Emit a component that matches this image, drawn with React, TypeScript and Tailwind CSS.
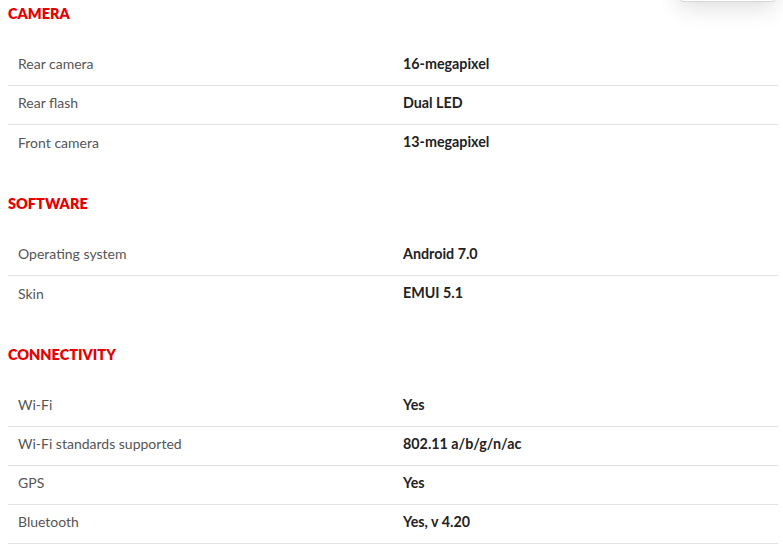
import React from 'react';

type Spec = { label: string; value: string };

const sections: { title: string; rows: Spec[]; closed?: boolean }[] = [
  {
    title: 'CAMERA',
    rows: [
      { label: 'Rear camera', value: '16-megapixel' },
      { label: 'Rear flash', value: 'Dual LED' },
      { label: 'Front camera', value: '13-megapixel' },
    ],
  },
  {
    title: 'SOFTWARE',
    rows: [
      { label: 'Operating system', value: 'Android 7.0' },
      { label: 'Skin', value: 'EMUI 5.1' },
    ],
  },
  {
    title: 'CONNECTIVITY',
    closed: true,
    rows: [
      { label: 'Wi-Fi', value: 'Yes' },
      { label: 'Wi-Fi standards supported', value: '802.11 a/b/g/n/ac' },
      { label: 'GPS', value: 'Yes' },
      { label: 'Bluetooth', value: 'Yes, v 4.20' },
    ],
  },
];

export default function App() {
  return (
    <div
      className="relative flex flex-col w-[783px] h-[553px] overflow-hidden bg-white pl-2 pr-[5px] pt-[3px]"
      style={{ fontFamily: 'Lato, "Noto Sans", sans-serif' }}
    >
      {/* dropdown peeking from the top */}
      <div className="absolute -top-10 right-[7px] w-[97px] h-[42px] bg-white border border-[#d6d6d6] rounded-b-sm shadow-[0_6px_22px_rgba(0,0,0,0.13)]" />

      {sections.map((section) => (
        <div key={section.title} className="flex flex-col mb-[29px]">
          <h3 className="mt-px h-5 leading-5 text-[14.5px] font-extrabold text-[#e60000]">{section.title}</h3>
          <div className="mt-[23px]">
            {section.rows.map((row, i) => (
              <div
                key={row.label}
                className={`grid grid-cols-[395px_1fr] items-center h-[39px] pb-[5px] ${
                  i < section.rows.length - 1 || section.closed ? 'border-b border-[#e3e3e3]' : ''
                }`}
              >
                <span className="pl-[10px] text-[14px] text-[#555555]">{row.label}</span>
                <span className="text-[14.3px] font-bold text-[#222222]">{row.value}</span>
              </div>
            ))}
          </div>
        </div>
      ))}
    </div>
  );
}
